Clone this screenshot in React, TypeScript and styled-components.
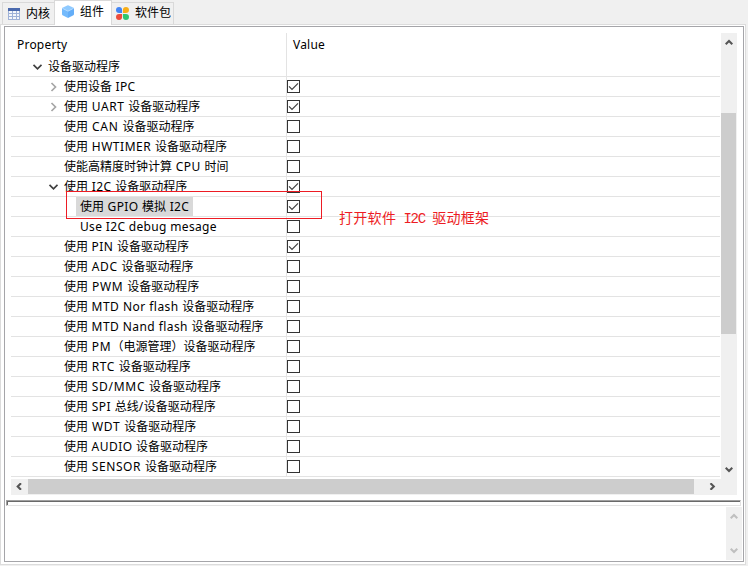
import React from "react";
import styled, { createGlobalStyle } from "styled-components";

const GlobalStyle = createGlobalStyle`
  * { box-sizing: border-box; }
  body {
    margin: 0;
    background: #f0f0f0;
    color: #000;
    font: 12px/20px "Noto Sans", "Noto Sans CJK SC", sans-serif;
    overflow: hidden;
  }
  svg { display: block; flex: none; }
`;

const Page = styled.main`
  position: relative;
  width: 748px;
  height: 566px;
  display: flex;
  flex-direction: column;
`;

const TabStrip = styled.nav`
  display: flex;
  align-items: flex-end;
  height: 24px;
  padding-left: 2px;
`;

const Tab = styled.div<{ $width: number; $active?: boolean }>`
  display: flex;
  align-items: center;
  gap: 6px;
  width: ${(p) => p.$width}px;
  height: ${(p) => (p.$active ? 25 : 22)}px;
  margin-bottom: ${(p) => (p.$active ? -1 : 0)}px;
  padding: 0 0 ${(p) => (p.$active ? 3 : 0)}px ${(p) => (p.$active ? 7 : 5)}px;
  border: 1px solid #d9d9d9;
  border-bottom: 0;
  border-right-width: ${(p) => (p.$active ? 1 : 0)}px;
  background: ${(p) => (p.$active ? "#fff" : "#f0f0f0")};
  white-space: nowrap;
  z-index: ${(p) => (p.$active ? 1 : 0)};
  &:last-child {
    padding: 0 0 1px 4px;
    border-left: 0;
    border-right-width: 1px;
  }
`;

const Frame = styled.section`
  width: 746px;
  height: 541px;
  padding: 1px 1px 2px 3px;
  border: 1px solid #dcdcdc;
  background: #fff;
`;

const Editor = styled.div`
  display: flex;
  flex-direction: column;
  height: 536px;
  border: 1px solid #a5a5a9;
`;

const Viewer = styled.div`
  width: 726px;
  height: 462px;
  margin: 6px 0 0 6px;
`;

const Upper = styled.div`
  display: flex;
  justify-content: space-between;
  height: 446px;
`;

const Tree = styled.div`
  width: 709px;
  height: 444px;
  background: linear-gradient(#e3e3e3, #e3e3e3) 275px 0 / 1px 100% no-repeat;
`;

const Header = styled.div`
  display: grid;
  grid-template-columns: 276px 1fr;
  height: 24px;
  padding-left: 6px;
  line-height: 23px;
  letter-spacing: 0.2px;
`;

const Row = styled.div`
  display: grid;
  grid-template-columns: 276px 1fr;
  height: 20px;
  border-bottom: 1px solid #e3e3e3;
`;

const NameCell = styled.div<{ $depth: number }>`
  display: flex;
  align-items: center;
  padding-left: ${(p) => 21 + p.$depth * 16}px;
  height: 19px;
`;

const Twisty = styled.span`
  width: 12px;
`;

const Label = styled.span<{ $selected?: boolean }>`
  height: 19px;
  line-height: 19px;
  padding: 0 4px;
  white-space: pre;
  background: ${(p) => (p.$selected ? "#d9d9d9" : "transparent")};
`;

const Latin = styled.span<{ $spacing: number }>`
  letter-spacing: ${(p) => p.$spacing}px;
`;

const CheckBox = styled.span`
  width: 13px;
  height: 13px;
  margin-top: 3px;
  border: 1px solid #333;
  background: #fff;
`;

const VBar = styled.div<{ $height: number }>`
  display: flex;
  flex-direction: column;
  align-items: center;
  justify-content: space-between;
  width: 16px;
  height: ${(p) => p.$height}px;
  padding: 6px 1px 6px 0;
  background: #f0f0f0;
`;

const VThumb = styled.div`
  width: 15px;
  height: 221px;
  margin: 67px 0 auto;
  background: #cdcdcd;
`;

const HBar = styled.div`
  display: flex;
  align-items: center;
  height: 16px;
  padding: 0 0 1px 4px;
  background: #f0f0f0;
`;

const HThumb = styled.div`
  width: 666px;
  height: 15px;
  margin: 0 14px 0 5px;
  background: #cdcdcd;
`;

const Sash = styled.div`
  width: 735px;
  height: 6px;
  margin: 5px 0 0 1px;
  border: 1px solid #e3e3e3;
  border-top-color: #a0a0a0;
  border-left-color: #a0a0a0;
  box-shadow: inset 0 1px #696969, inset 1px 0 #696969;
`;

const Description = styled.div`
  display: flex;
  justify-content: flex-end;
  margin: 1px 1px 0 0;
`;

const Outline = styled.div`
  position: absolute;
  left: 66px;
  top: 191px;
  width: 256px;
  height: 28px;
  border: 1px solid #ed1c24;
`;

const Note = styled.div`
  position: absolute;
  left: 339px;
  top: 209px;
  color: #ed1c24;
  font: 14px/20px "Liberation Mono", "Noto Sans CJK SC", monospace;
  letter-spacing: 0.3px;
  white-space: pre;
`;

type Direction = "up" | "down" | "left" | "right";

const chevrons: Record<Direction, string> = {
  up: "M.7 5.3 4 2l3.3 3.3",
  down: "M.7 1.7 4 5l3.3-3.3",
  left: "M6 .2 2.7 3.5 6 6.8",
  right: "M2.5.2l3.3 3.3-3.3 3.3",
};

function Arrow({ direction, muted }: { direction: Direction; muted?: boolean }) {
  return (
    <svg width="8" height="7" viewBox="0 0 8 7">
      <path
        d={chevrons[direction]}
        fill="none"
        stroke={muted ? "#bfbfbf" : "#555"}
        strokeWidth="2.1"
      />
    </svg>
  );
}

function Expander({ open }: { open: boolean }) {
  return (
    <svg width="10" height="12" viewBox="0 0 10 12">
      <path
        d={open ? "M1.5 3.8l4 4 4-4" : "M3.5 2l4 4-4 4"}
        fill="none"
        stroke={open ? "#404040" : "#a6a6a6"}
        strokeWidth="1.7"
      />
    </svg>
  );
}

function Check() {
  return (
    <svg width="11" height="11" viewBox="0 0 11 11">
      <path d="M1 5.3l3 3 6-6" fill="none" stroke="#404040" strokeWidth="1.2" />
    </svg>
  );
}

function TableIcon() {
  return (
    <svg width="12" height="12" viewBox="0 0 12 12" shapeRendering="crispEdges">
      <path fill="#9fb2d8" d="M0 0h12v12H0z" />
      <path fill="#4a69ad" d="M0 0h12v3H0z" />
      <path fill="#f5f7fb" d="M1 3h3v2H1zm4 0h3v2H5zm4 0h2v2H9zM1 6h3v2H1zm4 0h3v2H5zm4 0h2v2H9zM1 9h3v2H1zm4 0h3v2H5zm4 0h2v2H9z" />
    </svg>
  );
}

function CubeIcon() {
  return (
    <svg width="12" height="13" viewBox="0 0 12 13">
      <path fill="#8fcaff" d="M5.2.4Q6 0 6.8.4L12 3 6 6.2 0 3z" />
      <path fill="#74bafc" d="M0 3l6 3.2V13L.6 10.2Q0 9.8 0 9z" />
      <path fill="#64aef8" d="M12 3L6 6.2V13l5.4-2.8q.6-.4.6-1.2z" />
      <path fill="none" stroke="#b9ddff" strokeWidth=".8" d="M.5 3.4L6 6.2l5.5-2.8" />
    </svg>
  );
}

function PackageIcon() {
  return (
    <svg width="13" height="13" viewBox="0 0 12 12">
      <path fill="#4285f4" d="M2.8 0a2.8 2.8 0 0 1 2.8 2.8v2.8H2.8a2.8 2.8 0 1 1 0-5.6z" />
      <path fill="#f8ad15" d="M9.2 0a2.8 2.8 0 1 1 0 5.6H6.4V2.8A2.8 2.8 0 0 1 9.2 0z" />
      <path fill="#ed4c3c" d="M2.8 6.4h2.8v2.8a2.8 2.8 0 1 1-2.8-2.8z" />
      <path fill="#2fc76e" d="M6.4 6.4h2.8a2.8 2.8 0 1 1-2.8 2.8z" />
    </svg>
  );
}

function MixedText({ text, spacing = 0 }: { text: string; spacing?: number }) {
  return (
    <>
      {text.split(/([\x20-\x7e]+)/).map((part, i) =>
        i % 2 ? <Latin key={i} $spacing={spacing}>{part}</Latin> : part,
      )}
    </>
  );
}

interface Property {
  name: string;
  depth: number;
  checked?: boolean;
  open?: boolean;
  selected?: boolean;
  spacing?: number;
}

const properties: Property[] = [
  { name: "设备驱动程序", depth: 0, open: true },
  { name: "使用设备 IPC", depth: 1, open: false, checked: true, spacing: 0.35 },
  { name: "使用 UART 设备驱动程序", depth: 1, open: false, checked: true, spacing: 0.6 },
  { name: "使用 CAN 设备驱动程序", depth: 1, checked: false, spacing: 0.75 },
  { name: "使用 HWTIMER 设备驱动程序", depth: 1, checked: false, spacing: 0.55 },
  { name: "使能高精度时钟计算 CPU 时间", depth: 1, checked: false, spacing: 0.5 },
  { name: "使用 I2C 设备驱动程序", depth: 1, open: true, checked: true, spacing: 0.5 },
  { name: "使用 GPIO 模拟 I2C", depth: 2, checked: true, selected: true, spacing: 0.4 },
  { name: "Use I2C debug mesage", depth: 2, checked: false, spacing: 0.34 },
  { name: "使用 PIN 设备驱动程序", depth: 1, checked: true, spacing: 0.45 },
  { name: "使用 ADC 设备驱动程序", depth: 1, checked: false, spacing: 0.65 },
  { name: "使用 PWM 设备驱动程序", depth: 1, checked: false, spacing: 0.75 },
  { name: "使用 MTD Nor flash 设备驱动程序", depth: 1, checked: false, spacing: 0.47 },
  { name: "使用 MTD Nand flash 设备驱动程序", depth: 1, checked: false, spacing: 0.43 },
  { name: "使用 PM（电源管理）设备驱动程序", depth: 1, checked: false, spacing: 0.7 },
  { name: "使用 RTC 设备驱动程序", depth: 1, checked: false, spacing: 0.6 },
  { name: "使用 SD/MMC 设备驱动程序", depth: 1, checked: false, spacing: 0.7 },
  { name: "使用 SPI 总线/设备驱动程序", depth: 1, checked: false, spacing: 0.5 },
  { name: "使用 WDT 设备驱动程序", depth: 1, checked: false, spacing: 0.75 },
  { name: "使用 AUDIO 设备驱动程序", depth: 1, checked: false, spacing: 0.45 },
  { name: "使用 SENSOR 设备驱动程序", depth: 1, checked: false, spacing: 0.6 },
];

export default function App() {
  return (
    <>
      <GlobalStyle />
      <Page>
        <TabStrip>
          <Tab $width={52}><TableIcon />内核</Tab>
          <Tab $width={58} $active><CubeIcon />组件</Tab>
          <Tab $width={62}><PackageIcon />软件包</Tab>
        </TabStrip>
        <Frame>
          <Editor>
            <Viewer>
              <Upper>
                <Tree>
                  <Header><span>Property</span><span>Value</span></Header>
                  {properties.map((p) => (
                    <Row key={p.name}>
                      <NameCell $depth={p.depth}>
                        <Twisty>{p.open !== undefined && <Expander open={p.open} />}</Twisty>
                        <Label $selected={p.selected}>
                          <MixedText text={p.name} spacing={p.spacing} />
                        </Label>
                      </NameCell>
                      {p.checked !== undefined && <CheckBox>{p.checked && <Check />}</CheckBox>}
                    </Row>
                  ))}
                </Tree>
                <VBar $height={446}>
                  <Arrow direction="up" />
                  <VThumb />
                  <Arrow direction="down" />
                </VBar>
              </Upper>
              <HBar>
                <Arrow direction="left" />
                <HThumb />
                <Arrow direction="right" />
              </HBar>
            </Viewer>
            <Sash />
            <Description>
              <VBar $height={53}>
                <Arrow direction="up" muted />
                <Arrow direction="down" muted />
              </VBar>
            </Description>
          </Editor>
        </Frame>
        <Outline />
        <Note><MixedText text="打开软件 I2C 驱动框架" spacing={-1.2} /></Note>
      </Page>
    </>
  );
}
